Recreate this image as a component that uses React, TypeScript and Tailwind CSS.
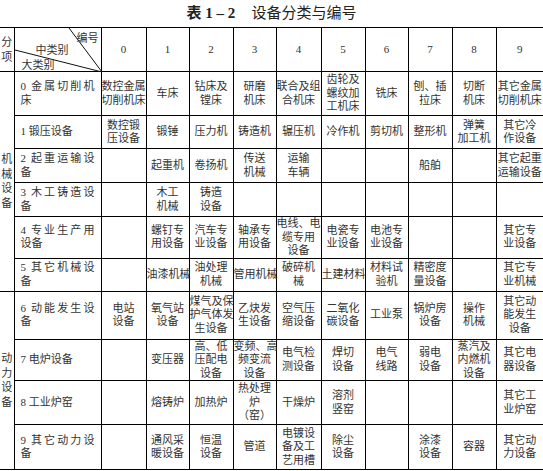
type Row = { name: string[]; h: string; cells: string[][] };

const machineRows: Row[] = [
  {
    name: ["0 金属切削机", "床"],
    h: "h-[44px]",
    cells: [
      ["数控金属", "切削机床"],
      ["车床"],
      ["钻床及", "镗床"],
      ["研磨", "机床"],
      ["联合及组", "合机床"],
      ["齿轮及", "螺纹加", "工机床"],
      ["铣床"],
      ["刨、插", "拉床"],
      ["切断", "机床"],
      ["其它金属", "切削机床"],
    ],
  },
  {
    name: ["1 锻压设备"],
    h: "h-[33px]",
    cells: [
      ["数控锻", "压设备"],
      ["锻锤"],
      ["压力机"],
      ["铸造机"],
      ["辗压机"],
      ["冷作机"],
      ["剪切机"],
      ["整形机"],
      ["弹簧", "加工机"],
      ["其它冷", "作设备"],
    ],
  },
  {
    name: ["2 起重运输设", "备"],
    h: "h-[34px]",
    cells: [
      [],
      ["起重机"],
      ["卷扬机"],
      ["传送", "机械"],
      ["运输", "车辆"],
      [],
      [],
      ["船舶"],
      [],
      ["其它起重", "运输设备"],
    ],
  },
  {
    name: ["3 木工铸造设", "备"],
    h: "h-[34px]",
    cells: [[], ["木工", "机械"], ["铸造", "设备"], [], [], [], [], [], [], []],
  },
  {
    name: ["4 专业生产用", "设备"],
    h: "h-[41px]",
    cells: [
      [],
      ["螺钉专", "用设备"],
      ["汽车专", "业设备"],
      ["轴承专", "用设备"],
      ["电线、电", "缆专用", "设备"],
      ["电瓷专", "业设备"],
      ["电池专", "业设备"],
      [],
      [],
      ["其它专", "业设备"],
    ],
  },
  {
    name: ["5 其它机械设", "备"],
    h: "h-[33px]",
    cells: [
      [],
      ["油漆机械"],
      ["油处理", "机械"],
      ["管用机械"],
      ["破碎机", "械"],
      ["土建材料"],
      ["材料试", "验机"],
      ["精密度", "量设备"],
      [],
      ["其它专", "业机械"],
    ],
  },
];

const powerRows: Row[] = [
  {
    name: ["6 动能发生设", "备"],
    h: "h-[48px]",
    cells: [
      ["电站", "设备"],
      ["氧气站", "设备"],
      ["煤气及保", "护气体发", "生设备"],
      ["乙炔发", "生设备"],
      ["空气压", "缩设备"],
      ["二氧化", "碳设备"],
      ["工业泵"],
      ["锅炉房", "设备"],
      ["操作", "机械"],
      ["其它动", "能发生", "设备"],
    ],
  },
  {
    name: ["7 电炉设备"],
    h: "h-[39px]",
    cells: [
      [],
      ["变压器"],
      ["高、低", "压配电", "设备"],
      ["变频、高", "频变流", "设备"],
      ["电气检", "测设备"],
      ["焊切", "设备"],
      ["电气", "线路"],
      ["弱电", "设备"],
      ["蒸汽及", "内燃机", "设备"],
      ["其它电", "器设备"],
    ],
  },
  {
    name: ["8 工业炉窑"],
    h: "h-[44px]",
    cells: [
      [],
      ["熔铸炉"],
      ["加热炉"],
      ["热处理", "炉", "（窑）"],
      ["干燥炉"],
      ["溶剂", "竖窑"],
      [],
      [],
      [],
      ["其它工", "业炉窑"],
    ],
  },
  {
    name: ["9 其它动力设", "备"],
    h: "h-[45px]",
    cells: [
      [],
      ["通风采", "暖设备"],
      ["恒温", "设备"],
      ["管道"],
      ["电镀设", "备及工", "艺用槽"],
      ["除尘", "设备"],
      [],
      ["涂漆", "设备"],
      ["容器"],
      ["其它动", "力设备"],
    ],
  },
];

const font = "font-['Liberation_Serif','Noto_Sans_CJK_SC',serif]";

function NameCell({ name }: { name: string[] }) {
  return (
    <td className="border border-black px-[6px] align-middle">
      {name.length > 1 ? (
        <>
          <div className="[text-align-last:justify]">{name[0]}</div>
          <div>{name[1]}</div>
        </>
      ) : (
        <div>{name[0]}</div>
      )}
    </td>
  );
}

function ItemCell({ lines, last }: { lines: string[]; last: boolean }) {
  return (
    <td
      className={
        last
          ? "border border-r-0 border-black p-0 text-center align-middle whitespace-nowrap"
          : "border border-black p-0 text-center align-middle whitespace-nowrap"
      }
    >
      {lines.map((l, i) => (
        <div key={i}>{l}</div>
      ))}
    </td>
  );
}

function GroupLabel({ text }: { text: string }) {
  return (
    <div className="flex flex-col items-center leading-[14.5px]">
      {text.split("").map((c, i) => (
        <span key={i}>{c}</span>
      ))}
    </div>
  );
}

function Group({ label, rows }: { label: string; rows: Row[] }) {
  return (
    <>
      {rows.map((row, ri) => (
        <tr key={ri} className={row.h}>
          {ri === 0 && (
            <td
              rowSpan={rows.length}
              className="border-b border-black p-0 align-middle"
            >
              <GroupLabel text={label} />
            </td>
          )}
          <NameCell name={row.name} />
          {row.cells.map((c, ci) => (
            <ItemCell key={ci} lines={c} last={ci === 9} />
          ))}
        </tr>
      ))}
    </>
  );
}

export default function App() {
  const widths = [14, 87, 45, 43, 44, 43, 45, 44, 43, 44, 44, 47];
  return (
    <div className={`w-[543px] h-[471px] bg-white text-[#333] ${font}`}>
      <div className="flex h-[27px] items-center justify-center text-[15px] text-[#222]">
        <span className="font-bold">表 1 – 2</span>
        <span className="ml-[16px]">设备分类与编号</span>
      </div>
      <table className="w-[543px] table-fixed border-collapse text-[11px] leading-[13.5px]">
        <colgroup>
          {widths.map((w, i) => (
            <col key={i} style={{ width: w }} />
          ))}
        </colgroup>
        <tbody>
          <tr className="h-[44px]">
            <td className="border-y border-black p-0 align-middle">
              <GroupLabel text="分项" />
            </td>
            <td className="border border-black p-0">
              <div className="relative h-[43px]">
                <svg
                  className="absolute inset-0"
                  width="87"
                  height="44"
                  viewBox="0 0 87 44"
                >
                  <line x1="54" y1="0" x2="87" y2="44" stroke="#111" strokeWidth="1" />
                  <line x1="0" y1="22" x2="87" y2="44" stroke="#111" strokeWidth="1" />
                </svg>
                <span className="absolute right-[2px] top-[4px]">编号</span>
                <span className="absolute left-[21px] top-[16px]">中类别</span>
                <span className="absolute left-[7px] top-[31px]">大类别</span>
              </div>
            </td>
            {[0, 1, 2, 3, 4, 5, 6, 7, 8, 9].map((n) => (
              <td
                key={n}
                className={
                  n === 9
                    ? "border border-r-0 border-black text-center align-middle"
                    : "border border-black text-center align-middle"
                }
              >
                {n}
              </td>
            ))}
          </tr>
          <Group label="机械设备" rows={machineRows} />
          <Group label="动力设备" rows={powerRows} />
        </tbody>
      </table>
    </div>
  );
}
